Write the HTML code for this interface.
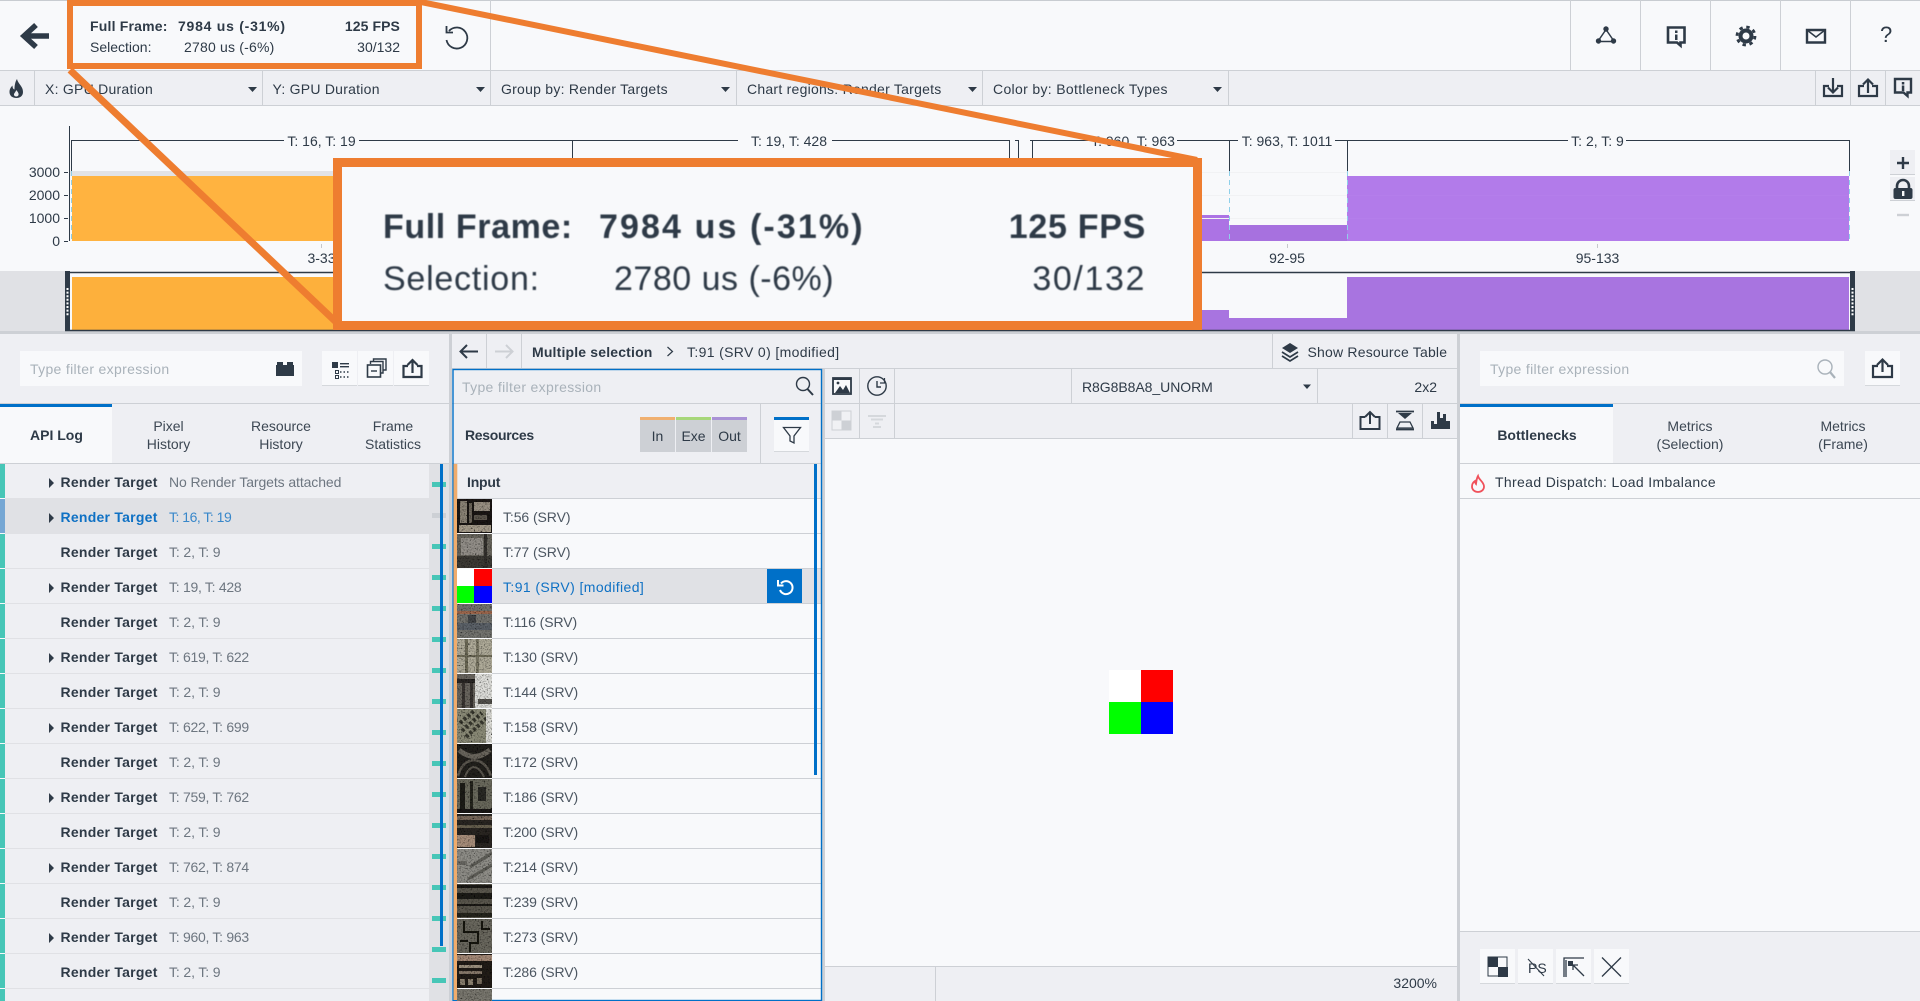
<!DOCTYPE html>
<html><head><meta charset="utf-8"><title>Frame Analyzer</title>
<style>
html,body{margin:0;padding:0;width:1920px;height:1001px;overflow:hidden;background:#f8f9fb}
body{position:relative;font-family:"Liberation Sans",sans-serif;font-size:14px;color:#2e3a47}
.b{position:absolute}
.t{position:absolute;white-space:nowrap;line-height:20px;height:20px}
.r{text-align:right}
.c{text-align:center;transform:translateX(-50%)}
.g{color:#6d7680}
.s{letter-spacing:-.12px}
.d{letter-spacing:-.28px}
.bo{font-weight:bold}
.rt{font-weight:bold;left:60.5px;letter-spacing:.25px}
.ph{color:#a9b2ba;letter-spacing:.33px}
.sel{color:#0f71c4}
.res{color:#4c5661;left:503px;letter-spacing:-.08px}
.tb{letter-spacing:.25px}
.big{font-size:34px;line-height:40px;height:40px}
svg{position:absolute;left:0;top:0}
.tab{position:absolute;white-space:nowrap;text-align:center;line-height:18px;transform:translateX(-50%);color:#3c4753}
</style></head><body>

<!-- backgrounds -->
<div class="b" style="left:0;top:0;width:1920px;height:1px;background:#c8ccd1"></div>
<div class="b" style="left:0;top:70px;width:1920px;height:1px;background:#cdd0d5"></div>
<div class="b" style="left:0;top:71px;width:1920px;height:34px;background:#eeeff3"></div>
<div class="b" style="left:0;top:105px;width:1920px;height:1px;background:#cdd0d5"></div>
<div class="b" style="left:0;top:271px;width:1920px;height:60px;background:#e0e1e5"></div>
<div class="b" style="left:65px;top:271px;width:1790px;height:60px;background:#f8f9fb"></div>
<div class="b" style="left:0;top:331px;width:1920px;height:3px;background:#cdd0d5"></div>
<div class="b" style="left:0;top:334px;width:449px;height:667px;background:#eeeff3"></div>
<div class="b" style="left:449px;top:334px;width:3px;height:667px;background:#cdd0d5"></div>
<div class="b" style="left:452px;top:334px;width:1005px;height:104px;background:#eeeff3"></div>
<div class="b" style="left:452px;top:438px;width:373px;height:60px;background:#eeeff3"></div>
<div class="b" style="left:822px;top:369px;width:3px;height:632px;background:#cdd0d5"></div>
<div class="b" style="left:1457px;top:334px;width:3px;height:667px;background:#cdd0d5"></div>
<div class="b" style="left:1460px;top:334px;width:460px;height:130px;background:#eeeff3"></div>
<div class="b" style="left:825px;top:966px;width:632px;height:35px;background:#eeeff3"></div>
<div class="b" style="left:825px;top:438px;width:632px;height:1px;background:#cdd0d5"></div>
<div class="b" style="left:825px;top:966px;width:632px;height:1px;background:#cdd0d5"></div>
<div class="b" style="left:1460px;top:931px;width:460px;height:70px;background:#eeeff3"></div>
<div class="b" style="left:1460px;top:931px;width:460px;height:1px;background:#cdd0d5"></div>
<div class="b" style="left:429px;top:464px;width:20px;height:537px;background:#e0e1e5"></div>

<!-- API log selected row -->
<div class="b" style="left:0;top:498px;width:429px;height:35px;background:#e0e1e5"></div>
<!-- active tabs -->
<div class="b" style="left:0;top:404px;width:112px;height:59px;background:#f8f9fb"></div>
<div class="b" style="left:1460px;top:404px;width:153px;height:59px;background:#f8f9fb"></div>
<div class="b" style="left:0;top:404px;width:112px;height:3px;background:#0070c8"></div>
<div class="b" style="left:1460px;top:404px;width:153px;height:3px;background:#0070c8"></div>
<!-- resource rows bg -->
<div class="b" style="left:457px;top:498px;width:365px;height:503px;background:#f8f9fb"></div>
<div class="b" style="left:492px;top:569px;width:330px;height:34px;background:#e0e1e5"></div>
<!-- inputs -->
<div class="b" style="left:20px;top:351px;width:282px;height:35px;background:#f8f9fb"></div>
<div class="b" style="left:1480px;top:351px;width:364px;height:35px;background:#f8f9fb"></div>
<div class="b" style="left:322px;top:351px;width:35px;height:34px;background:#f8f9fb;border-bottom:1px solid #d5d8dc"></div>
<div class="b" style="left:358px;top:351px;width:35px;height:34px;background:#f8f9fb;border-bottom:1px solid #d5d8dc"></div>
<div class="b" style="left:394px;top:351px;width:35px;height:34px;background:#f8f9fb;border-bottom:1px solid #d5d8dc"></div>
<div class="b" style="left:1865px;top:351px;width:35px;height:34px;background:#f8f9fb;border-bottom:1px solid #d5d8dc"></div>
<div class="b" style="left:1480px;top:949px;width:35px;height:34px;background:#f8f9fb;border-bottom:1px solid #d5d8dc"></div>
<div class="b" style="left:1518px;top:949px;width:35px;height:34px;background:#f8f9fb;border-bottom:1px solid #d5d8dc"></div>
<div class="b" style="left:1556px;top:949px;width:35px;height:34px;background:#f8f9fb;border-bottom:1px solid #d5d8dc"></div>
<div class="b" style="left:1594px;top:949px;width:35px;height:34px;background:#f8f9fb;border-bottom:1px solid #d5d8dc"></div>
<!-- In Exe Out -->
<div class="b" style="left:640px;top:417px;width:35px;height:32px;background:#cdd0d5;border-top:3px solid #f0b070"></div>
<div class="b" style="left:676px;top:417px;width:35px;height:32px;background:#cdd0d5;border-top:3px solid #a7d77a"></div>
<div class="b" style="left:712px;top:417px;width:35px;height:32px;background:#cdd0d5;border-top:3px solid #a992d6"></div>
<div class="b" style="left:774px;top:417px;width:35px;height:31px;background:#f8f9fb;border-top:3px solid #0070c8;border-bottom:1px solid #d5d8dc"></div>
<!-- test image -->
<div class="b" style="left:1109px;top:670px;width:32px;height:32px;background:#fff"></div>
<div class="b" style="left:1141px;top:670px;width:32px;height:32px;background:#f00"></div>
<div class="b" style="left:1109px;top:702px;width:32px;height:32px;background:#0f0"></div>
<div class="b" style="left:1141px;top:702px;width:32px;height:32px;background:#00f"></div>
<!-- undo btn -->
<div class="b" style="left:767px;top:569px;width:35px;height:34px;background:#0070c8"></div>

<svg width="1920" height="1001" viewBox="0 0 1920 1001">
<defs>
<filter id="n" x="0" y="0" width="100%" height="100%">
<feTurbulence type="fractalNoise" baseFrequency="0.7" numOctaves="2" seed="4" result="a"/>
<feColorMatrix in="a" type="matrix" values="1.2 1.2 1.2 0 -0.95 1.2 1.2 1.2 0 -0.95 1.2 1.2 1.2 0 -0.95 0 0 0 0 1" result="g"/>
<feBlend in="SourceGraphic" in2="g" mode="multiply" result="m"/>
<feComposite in="m" in2="SourceGraphic" operator="in"/>
</filter>
</defs>

<!-- separators -->
<g stroke="#cdd0d5" stroke-width="1">
<path d="M490.5 0V70M1570.5 0V70M1640.5 0V70M1710.5 0V70M1780.5 0V70M1850.5 0V70"/>
<path d="M34.5 71V105M262.5 71V105M490.5 71V105M736.5 71V105M982.5 71V105M1228.5 71V105M1815.5 71V105M1850.5 71V105M1885.5 71V105"/>
<path d="M0 403.5H449M0 463.5H449M452 368.5H1457M452 403.5H1457M452 463.5H822M1460 403.5H1920M1460 463.5H1920M1460 498.5H1920"/>
<path d="M486.5 334V368M521.5 334V368M1272.5 334V368M760.5 404V463M859.5 369V438M894.5 369V438M1071.5 369V403M1317.5 369V403M1352.5 404V438M1387.5 404V438M1422.5 404V438M935.5 966V1001"/>
</g>
<!-- API rows lines -->
<path d="M5 498.500H429M5 533.500H429M5 568.500H429M5 603.500H429M5 638.500H429M5 673.500H429M5 708.500H429M5 743.500H429M5 778.500H429M5 813.500H429M5 848.500H429M5 883.500H429M5 918.500H429M5 953.500H429M5 988.500H429" stroke="#e0e1e5"/>
<!-- resource row lines -->
<path d="M457 498.500H822M492 533.500H822M492 568.500H822M492 603.500H822M492 638.500H822M492 673.500H822M492 708.500H822M492 743.500H822M492 778.500H822M492 813.500H822M492 848.500H822M492 883.500H822M492 918.500H822M492 953.500H822M492 988.500H822" stroke="#cdd0d5"/>
<!-- left strip -->
<rect x="0" y="464" width="5" height="537" fill="#47c6b7"/>
<rect x="0" y="499" width="5" height="34" fill="#76a7d4"/>
<path d="M0 498.500H5M0 533.500H5M0 568.500H5M0 603.500H5M0 638.500H5M0 673.500H5M0 708.500H5M0 743.500H5M0 778.500H5M0 813.500H5M0 848.500H5M0 883.500H5M0 918.500H5M0 953.500H5M0 988.500H5" stroke="#f8f9fb"/>
<!-- teal marks -->
<g fill="#47c6b7">
<rect x="432" y="482" width="14" height="5"/>
<rect x="432" y="513" width="14" height="5" fill="#cdd0d5"/>
<rect x="432" y="544" width="14" height="5"/><rect x="432" y="575" width="14" height="5"/>
<rect x="432" y="606" width="14" height="5"/><rect x="432" y="637" width="14" height="5"/>
<rect x="432" y="668" width="14" height="5"/><rect x="432" y="699" width="14" height="5"/>
<rect x="432" y="730" width="14" height="5"/><rect x="432" y="761" width="14" height="5"/>
<rect x="432" y="792" width="14" height="5"/><rect x="432" y="823" width="14" height="5"/>
<rect x="432" y="854" width="14" height="5"/><rect x="432" y="885" width="14" height="5"/>
<rect x="432" y="916" width="14" height="5"/><rect x="432" y="947" width="14" height="5"/>
<rect x="432" y="978" width="14" height="5"/>
</g>
<rect x="440" y="464" width="3" height="482" fill="#0070c8"/>
<!-- expand arrows -->
<path d="M49 478L54 483L49 488ZM49 513L54 518L49 523ZM49 583L54 588L49 593ZM49 653L54 658L49 663ZM49 723L54 728L49 733ZM49 793L54 798L49 803ZM49 863L54 868L49 873ZM49 933L54 938L49 943Z" fill="#2e3a47"/>

<!-- resources border -->
<rect x="453" y="369.500" width="368.500" height="631" fill="none" stroke="#0070c8" stroke-width="1.400"/>
<rect x="453.500" y="464" width="3.800" height="536" fill="#f0ac6c"/>
<rect x="814" y="464" width="3" height="311" fill="#0070c8"/>

<!-- thumbs -->
<g filter="url(#n)" transform="translate(0,1)">
<rect x="457" y="498" width="35" height="34" fill="#1c1815"/><rect x="460" y="500" width="7" height="22" fill="#8b8376"/><rect x="469" y="502" width="3" height="20" fill="#6d665b"/><rect x="474" y="501" width="16" height="9" fill="#9a9184"/><rect x="474" y="514" width="13" height="5" fill="#5d574d"/><rect x="459" y="524" width="32" height="7" fill="#a89e8d"/>
<rect x="457" y="533" width="35" height="34" fill="#6a675f"/><rect x="461" y="537" width="22" height="17" fill="#94908a"/><rect x="457" y="555" width="35" height="12" fill="#3d3b36"/><rect x="484" y="533" width="3" height="34" fill="#34322e"/>
<rect x="457" y="603" width="35" height="34" fill="#747470"/><rect x="457" y="610" width="35" height="3" fill="#a06a50"/><rect x="457" y="622" width="35" height="7" fill="#5d636a"/><rect x="468" y="614" width="8" height="8" fill="#44474a"/>
<rect x="457" y="638" width="35" height="34" fill="#b0ac9a"/><rect x="465" y="638" width="3" height="34" fill="#6f6c59"/><rect x="476" y="638" width="3" height="34" fill="#7d7a67"/><rect x="457" y="654" width="35" height="2" fill="#6f6c59"/>
<rect x="457" y="673" width="35" height="34" fill="#e0e0dc"/><rect x="457" y="673" width="18" height="34" fill="#6a665f"/><rect x="457" y="678" width="18" height="4" fill="#2b2825"/><rect x="462" y="682" width="3" height="25" fill="#3a3633"/><rect x="470" y="682" width="3" height="25" fill="#3a3633"/><rect x="478" y="698" width="14" height="5" fill="#55534e"/>
<rect x="457" y="708" width="35" height="34" fill="#8c8c78"/><path d="M462 730L482 712M466 736L488 716M460 722L474 710" stroke="#3a3a30" stroke-width="4" stroke-dasharray="3 2"/><rect x="486" y="708" width="6" height="34" fill="#dcdcd6"/>
<rect x="457" y="743" width="35" height="34" fill="#23211e"/><path d="M459 749Q474 762 490 749" fill="none" stroke="#6a665d" stroke-width="5"/><path d="M458 775Q462 760 474 759Q486 760 491 775" fill="none" stroke="#5c5850" stroke-width="2.500"/><path d="M465 776Q468 767 474 766Q480 767 484 776" fill="none" stroke="#5c5850" stroke-width="2"/>
<rect x="457" y="778" width="35" height="34" fill="#6b6a5d"/><rect x="460" y="782" width="5" height="26" fill="#1f1e19"/><rect x="470" y="780" width="3" height="30" fill="#26251f"/><rect x="478" y="786" width="8" height="14" fill="#2b2a25"/><rect x="457" y="808" width="35" height="4" fill="#1a1915"/>
<rect x="457" y="813" width="35" height="34" fill="#2a2622"/><rect x="457" y="815" width="35" height="4" fill="#7a6a5c"/><rect x="457" y="824" width="35" height="3" fill="#67604f"/><rect x="457" y="834" width="18" height="12" fill="#a98f7b"/><rect x="476" y="834" width="13" height="8" fill="#1b1916"/>
<rect x="457" y="848" width="35" height="34" fill="#8f8e88"/><path d="M470 866L492 852M468 878L492 864" stroke="#5f5e58" stroke-width="3"/><rect x="457" y="860" width="10" height="4" fill="#6f6e68"/>
<rect x="457" y="883" width="35" height="34" fill="#5a574d"/><rect x="457" y="884" width="35" height="3" fill="#1c1a16"/><rect x="457" y="892" width="35" height="6" fill="#1f1d19"/><rect x="457" y="903" width="35" height="2" fill="#1c1a16"/><rect x="457" y="912" width="35" height="4" fill="#27251f"/>
<rect x="457" y="918" width="35" height="34" fill="#6a685e"/><path d="M464 920V931H478V942H470V951M482 920V928H490M460 940H468" fill="none" stroke="#171611" stroke-width="2"/>
<rect x="457" y="953" width="35" height="34" fill="#221d19"/><rect x="457" y="954" width="35" height="6" fill="#a58a78"/><rect x="459" y="964" width="23" height="3" fill="#9d917f"/><rect x="459" y="970" width="23" height="3" fill="#86786a"/><rect x="460" y="978" width="5" height="6" fill="#8d8271"/><rect x="468" y="978" width="5" height="6" fill="#8d8271"/><rect x="477" y="977" width="5" height="6" fill="#7a6f60"/>
<rect x="457" y="988" width="35" height="12" fill="#7a786f"/>
</g>
<g transform="translate(0,1)">
<rect x="457" y="568" width="17" height="17" fill="#fff"/><rect x="474" y="568" width="18" height="17" fill="#f00"/>
<rect x="457" y="585" width="17" height="17" fill="#0f0"/><rect x="474" y="585" width="18" height="17" fill="#00f"/>
</g>

<!-- chart -->
<rect x="70" y="171" width="300" height="5" fill="#e2e3e6"/>
<rect x="72" y="176" width="300" height="65" fill="#ffb340"/>
<rect x="1347" y="176" width="502" height="65" fill="#b27bea"/>
<rect x="1229" y="225" width="118" height="16" fill="#a771df"/>
<rect x="1190" y="215" width="39" height="26" fill="#ac73e4"/>
<path d="M1202 172.500H1347M1202 195.500H1347M1202 218.500H1347" stroke="#f1f2f4"/>
<path d="M1347 195.500H1849M1347 218.500H1849" stroke="#b47eeb"/>
<path d="M1229.500 171V241M1347.500 171V241M1849.500 171V241M71.500 171V241" stroke="#8fd0ea" stroke-dasharray="5 4"/>
<path d="M69.500 126V241M64 172.500H68M64 195.500H68M64 218.500H68M64 241.500H68" stroke="#2e3a47"/>
<path d="M71.500 171V140.500H284M359 140.500H572M572.500 171V140.500H738M832 140.500H1009.500V171M1015 140.500H1018.500V171M1030 140.500H1090M1177 140.500H1229.500V171M1229.500 140.500H1238M1335 140.500H1347.500V171M1347.500 140.500H1568M1626 140.500H1849.500V171M1032.500 140.500V171" stroke="#2e3a47" fill="none"/>
<path d="M321.500 244V248M1287.500 244V248M1597.500 244V248" stroke="#c5c8cc"/>

<!-- mini chart -->
<rect x="72" y="277" width="300" height="53" fill="#fdb03c"/>
<rect x="1347" y="277" width="502" height="53" fill="#a874e0"/>
<rect x="1229" y="318" width="118" height="12" fill="#a874e0"/>
<rect x="1190" y="310" width="39" height="20" fill="#a874e0"/>
<path d="M65 272.500H1855M65 330.500H1855" stroke="#2e3a47" stroke-width="1.400"/>
<rect x="65" y="271" width="5" height="60" fill="#2e3a47"/>
<rect x="1850" y="271" width="5" height="60" fill="#2e3a47"/>
<path d="M67.500 288V316M1852.500 288V316" stroke="#fff" stroke-width="2" stroke-dasharray="2 1.600"/>

<!-- chart controls -->
<rect x="1890" y="150" width="25" height="24" fill="#eeeff3"/><rect x="1890" y="177" width="25" height="23" fill="#eeeff3"/>
<path d="M1890 174.500H1915M1890 200.500H1915" stroke="#cdd0d5"/>
<path d="M1903 157V169M1897 163H1909" stroke="#2e3a47" stroke-width="2.400"/>
<path d="M1897 190V186a6 6 0 0 1 12 0V190" fill="none" stroke="#2e3a47" stroke-width="2.600"/>
<rect x="1893.500" y="188" width="19" height="11" rx="2" fill="#2e3a47"/><rect x="1902" y="191" width="2.400" height="5" fill="#f8f9fb"/>
<path d="M1897 215H1909" stroke="#cdd0d5" stroke-width="2.400"/>

<!-- top icons -->
<path d="M49 36H25" stroke="#2e3a47" stroke-width="5.500" fill="none"/>
<path d="M36 25L24 36L36 47" stroke="#2e3a47" stroke-width="5.500" fill="none"/>
<path d="M449 31A10.500 10.500 0 1 1 446.500 40" fill="none" stroke="#2e3a47" stroke-width="1.800"/>
<path d="M446.500 26V32.500H453" fill="none" stroke="#2e3a47" stroke-width="1.800"/>

<circle cx="1606" cy="29" r="2.700" fill="#2e3a47"/><circle cx="1598.500" cy="41" r="2.700" fill="#2e3a47"/><circle cx="1613.500" cy="41" r="2.700" fill="#2e3a47"/>
<path d="M1605 31L1599.500 39M1607 31L1612.500 39M1601 41.500H1611" stroke="#2e3a47" stroke-width="1.500" fill="none"/>
<path d="M1668 27.500H1684.500V42.500H1680.500V45.500L1677 42.500H1668Z" fill="none" stroke="#2e3a47" stroke-width="2.600"/>
<rect x="1675" y="30.500" width="2.500" height="2.500" fill="#2e3a47"/><rect x="1675" y="34.500" width="2.500" height="5.500" fill="#2e3a47"/>
<circle cx="1746" cy="36" r="5.500" fill="none" stroke="#2e3a47" stroke-width="4"/>
<circle cx="1746" cy="36" r="9" fill="none" stroke="#2e3a47" stroke-width="2.800" stroke-dasharray="3.400 3.670"/>
<path d="M1807 30H1825V42.500H1807Z" fill="none" stroke="#2e3a47" stroke-width="2.400"/>
<path d="M1807 30L1816 37L1825 30" fill="none" stroke="#2e3a47" stroke-width="1.500"/>

<!-- flame -->
<path d="M17 79C18 84 23 86 23 92C23 96 20 98 16.500 98C12 98 9.500 95.500 9.500 92C9.500 89 11 87 12.500 85.500C12.500 87.500 13 89 14.500 89.500C14.500 86 15 82 17 79Z" fill="#2e3a47"/>
<path d="M16.500 90C17.500 92 19 93 18.500 95C18 97 14.500 97 14 95C13.700 93.500 15.500 92 16.500 90Z" fill="#eeeff3"/>

<!-- dropdown triangles -->
<path d="M248 87H257L252.500 92ZM476 87H485L480.500 92ZM721 87H730L725.500 92ZM968 87H977L972.500 92ZM1213 87H1222L1217.500 92ZM1303 384.500H1311L1307 389Z" fill="#2e3a47"/>

<!-- toolbar right: download, upload, info -->
<path d="M1829 86H1824V96H1842V86H1837" fill="none" stroke="#2e3a47" stroke-width="2.200"/>
<path d="M1833 78V92M1828 87.500L1833 92.500L1838 87.500" fill="none" stroke="#2e3a47" stroke-width="2.200"/>
<path d="M1864 86H1859V96H1877V86H1872" fill="none" stroke="#2e3a47" stroke-width="2.200"/>
<path d="M1868 93V79.500M1863 84.500L1868 79.500L1873 84.500" fill="none" stroke="#2e3a47" stroke-width="2.200"/>
<path d="M1895 79H1911V92.500H1907.500V96L1903.500 92.500H1895Z" fill="none" stroke="#2e3a47" stroke-width="2.400"/>
<rect x="1901.800" y="82" width="2.500" height="2.500" fill="#2e3a47"/><rect x="1901.800" y="85.500" width="2.500" height="5.500" fill="#2e3a47"/>

<!-- left panel icons -->
<path d="M276 365H294V376H276ZM277 362H283V365H277ZM287 362H293V365H287Z" fill="#2e3a47"/>
<rect x="332" y="362" width="6" height="6" fill="#2e3a47"/><rect x="340" y="363" width="9" height="1.400" fill="#2e3a47"/><rect x="340" y="366" width="9" height="1.400" fill="#2e3a47"/>
<path d="M335.500 370.500h3v3h-3zM335.500 375.500h3v3h-3z" fill="none" stroke="#2e3a47" stroke-width="1"/>
<path d="M340 372h1.500M343.500 372h1.500M347 372h1.500M340 377h1.500M343.500 377h1.500M347 377h1.500" stroke="#2e3a47" stroke-width="1.400"/>
<rect x="367.500" y="365" width="13" height="12" fill="none" stroke="#2e3a47" stroke-width="1.600"/>
<path d="M370.500 364V361.500H383V373H381M373.500 361V359H386V370H383.500" fill="none" stroke="#2e3a47" stroke-width="1.400"/>
<path d="M371 371H377" stroke="#2e3a47" stroke-width="1.400"/>
<path d="M408 366H403.500V377H421.500V366H417" fill="none" stroke="#2e3a47" stroke-width="2.200"/>
<path d="M412.500 373V360M407.500 365L412.500 360L417.500 365" fill="none" stroke="#2e3a47" stroke-width="2.200"/>

<!-- middle header arrows -->
<path d="M478 351.500H461M467 345L460.500 351.500L467 358" fill="none" stroke="#2e3a47" stroke-width="2"/>
<path d="M495 351.500H512M506 345L512.500 351.500L506 358" fill="none" stroke="#cdd0d5" stroke-width="2"/>
<path d="M667.500 347L672.500 351.500L667.500 356" fill="none" stroke="#2e3a47" stroke-width="1.200"/>
<!-- stack icon -->
<path d="M1290 343L1298 348L1290 353L1282 348Z" fill="#2e3a47"/>
<path d="M1282 352L1290 357L1298 352M1282 356L1290 361L1298 356" fill="none" stroke="#2e3a47" stroke-width="1.700"/>
<!-- search -->
<circle cx="803" cy="384" r="6.500" fill="none" stroke="#2e3a47" stroke-width="1.400"/>
<path d="M807.500 389L813 395" stroke="#2e3a47" stroke-width="2"/>
<circle cx="1825" cy="367" r="7" fill="none" stroke="#a9b2ba" stroke-width="1.400"/>
<path d="M1830 372L1835 378" stroke="#a9b2ba" stroke-width="2.200"/>
<!-- funnel -->
<path d="M783.500 427.500H800.500L794 436V443L790 441V436Z" fill="none" stroke="#2e3a47" stroke-width="1.300"/>
<!-- undo small white -->
<path d="M781 583.500A6.500 6.500 0 1 1 780 590" fill="none" stroke="#fff" stroke-width="2"/>
<path d="M778 580V585.500H783.500" fill="none" stroke="#fff" stroke-width="2"/>
<!-- viewer icons -->
<rect x="833" y="378" width="18" height="16" fill="#f8f9fb" stroke="#2e3a47" stroke-width="1.800"/>
<rect x="833" y="378" width="18" height="2" fill="#2e3a47"/>
<path d="M835 393L840 386L843 390L846 385L850 393Z" fill="#2e3a47"/><circle cx="838" cy="383" r="1.400" fill="#2e3a47"/>
<circle cx="877" cy="386" r="9.200" fill="none" stroke="#2e3a47" stroke-width="1.400"/>
<path d="M877 381V387H881" fill="none" stroke="#2e3a47" stroke-width="1.400"/>
<path d="M884.500 378V383H880" fill="none" stroke="#2e3a47" stroke-width="1.200"/>
<rect x="832" y="411" width="19" height="19" fill="#f0f1f4" stroke="#cdd0d5"/>
<rect x="832.500" y="411.500" width="9" height="9" fill="#cdd0d5"/><rect x="841.500" y="420.500" width="9" height="9" fill="#cdd0d5"/>
<path d="M868 416H886M871 419.500H883" stroke="#d5d8dc" stroke-width="2"/><path d="M873 427H881M875 423.500H879" stroke="#d5d8dc" stroke-width="2"/>
<!-- viewer right icons -->
<g transform="translate(0,7)">
<path d="M1365 410H1360.500V422H1379.500V410H1375" fill="none" stroke="#2e3a47" stroke-width="2"/>
<path d="M1370 417V405M1365 410L1370 405L1375 410" fill="none" stroke="#2e3a47" stroke-width="2"/>
<path d="M1396 404.500H1414" stroke="#2e3a47" stroke-width="1.800"/>
<path d="M1398 406H1412L1405 412Z" fill="#2e3a47"/>
<path d="M1400 415H1410L1413 421H1397Z" fill="none" stroke="#2e3a47" stroke-width="1.300"/>
<path d="M1396 422.500H1414" stroke="#2e3a47" stroke-width="1.800"/>
<path d="M1431 422V414H1434V417H1437V405H1440V411H1443V407H1446V414H1450V422Z" fill="#2e3a47"/>
</g>
<!-- right panel icons -->
<path d="M1878 366H1873V377H1892V366H1887" fill="none" stroke="#2e3a47" stroke-width="2.200"/>
<path d="M1882.500 372V359.500M1877 365L1882.500 359.500L1888 365" fill="none" stroke="#2e3a47" stroke-width="2.200"/>
<path d="M1478 476C1479 480 1484 482 1484 486.500C1484 490 1481 492 1478 492C1475 492 1472 490 1472 486.500C1472 484 1473.500 482 1475 481C1475 482.500 1475.500 483.500 1476 484C1476.500 481 1476.500 478.500 1478 476Z" fill="none" stroke="#f0505a" stroke-width="1.800"/>
<rect x="1488" y="957" width="19" height="19" fill="#f8f9fb" stroke="#2e3a47"/>
<rect x="1488" y="957" width="10" height="10" fill="#2e3a47"/><rect x="1498" y="967" width="10" height="10" fill="#2e3a47"/>
<path d="M1528 959L1544 976" stroke="#2e3a47" stroke-width="1.100"/>
<text x="1528" y="973" font-size="14" fill="#2e3a47" font-family="Liberation Sans">PS</text>
<path d="M1564 977V958H1584M1566 960V977" stroke="#2e3a47" fill="none" stroke-width="1.300"/>
<rect x="1568" y="961" width="5" height="5" fill="#2e3a47"/>
<path d="M1584 976L1573 965M1573 970V965H1578" stroke="#2e3a47" fill="none" stroke-width="1.300"/>
<path d="M1602 957.500L1621 976.500M1621 957.500L1602 976.500" stroke="#2e3a47" fill="none" stroke-width="1.300"/>
</svg>

<!-- toolbar text -->
<div class="t tb" style="left:45px;top:79px">X: GPU Duration</div>
<div class="t tb" style="left:272.500px;top:79px">Y: GPU Duration</div>
<div class="t tb" style="left:501px;top:79px">Group by: Render Targets</div>
<div class="t tb" style="left:747px;top:79px">Chart regions: Render Targets</div>
<div class="t" style="left:993px;top:79px;letter-spacing:.33px">Color by: Bottleneck Types</div>

<!-- small stats -->
<div class="t bo" style="left:90px;top:16px;letter-spacing:.2px">Full Frame:</div>
<div class="t bo" style="left:178px;top:16px;letter-spacing:.75px">7984 us (-31%)</div>
<div class="t bo r" style="right:1520px;top:16px;letter-spacing:.1px">125 FPS</div>
<div class="t" style="left:90px;top:37px">Selection:</div>
<div class="t" style="left:184px;top:37px;letter-spacing:.2px">2780 us (-6%)</div>
<div class="t r" style="right:1520px;top:37px">30/132</div>
<div class="t" style="left:1880px;top:25px;font-size:22px">?</div>

<!-- chart labels -->
<div class="t r" style="right:1860px;top:162px">3000</div>
<div class="t r" style="right:1860px;top:185px">2000</div>
<div class="t r" style="right:1860px;top:208px">1000</div>
<div class="t r" style="right:1860px;top:231px">0</div>
<div class="t c" style="left:321.500px;top:131px">T: 16, T: 19</div>
<div class="t c" style="left:789px;top:131px">T: 19, T: 428</div>
<div class="t c" style="left:1133px;top:131px">T: 960, T: 963</div>
<div class="t c" style="left:1287px;top:131px">T: 963, T: 1011</div>
<div class="t c" style="left:1597.500px;top:131px">T: 2, T: 9</div>
<div class="t c" style="left:321.500px;top:248px">3-33</div>
<div class="t c" style="left:1287px;top:248px">92-95</div>
<div class="t c" style="left:1597.500px;top:248px">95-133</div>

<!-- left panel -->
<div class="t ph" style="left:30px;top:359px">Type filter expression</div>
<div class="t bo" style="left:30px;top:425px;color:#2e3a47">API Log</div>
<div class="tab" style="left:168.500px;top:417px">Pixel<br>History</div>
<div class="tab" style="left:281px;top:417px">Resource<br>History</div>
<div class="tab" style="left:393px;top:417px">Frame<br>Statistics</div>

<div class="t rt" style="top:472px">Render Target</div><div class="t g" style="left:169px;top:472px;letter-spacing:-.1px">No Render Targets attached</div>
<div class="t rt sel" style="top:507px">Render Target</div><div class="t sel" style="left:169px;top:507px;opacity:.8;letter-spacing:-.5px">T: 16, T: 19</div>
<div class="t rt" style="top:542px">Render Target</div><div class="t g s" style="left:169px;top:542px">T: 2, T: 9</div>
<div class="t rt" style="top:577px">Render Target</div><div class="t g d" style="left:169px;top:577px">T: 19, T: 428</div>
<div class="t rt" style="top:612px">Render Target</div><div class="t g s" style="left:169px;top:612px">T: 2, T: 9</div>
<div class="t rt" style="top:647px">Render Target</div><div class="t g d" style="left:169px;top:647px">T: 619, T: 622</div>
<div class="t rt" style="top:682px">Render Target</div><div class="t g s" style="left:169px;top:682px">T: 2, T: 9</div>
<div class="t rt" style="top:717px">Render Target</div><div class="t g d" style="left:169px;top:717px">T: 622, T: 699</div>
<div class="t rt" style="top:752px">Render Target</div><div class="t g s" style="left:169px;top:752px">T: 2, T: 9</div>
<div class="t rt" style="top:787px">Render Target</div><div class="t g d" style="left:169px;top:787px">T: 759, T: 762</div>
<div class="t rt" style="top:822px">Render Target</div><div class="t g s" style="left:169px;top:822px">T: 2, T: 9</div>
<div class="t rt" style="top:857px">Render Target</div><div class="t g d" style="left:169px;top:857px">T: 762, T: 874</div>
<div class="t rt" style="top:892px">Render Target</div><div class="t g s" style="left:169px;top:892px">T: 2, T: 9</div>
<div class="t rt" style="top:927px">Render Target</div><div class="t g d" style="left:169px;top:927px">T: 960, T: 963</div>
<div class="t rt" style="top:962px">Render Target</div><div class="t g s" style="left:169px;top:962px">T: 2, T: 9</div>

<!-- middle -->
<div class="t" style="left:532px;top:341.500px;font-weight:bold;letter-spacing:.17px">Multiple selection</div>
<div class="t" style="left:687px;top:341.500px;letter-spacing:.35px">T:91 (SRV 0) [modified]</div>
<div class="t" style="left:1307.500px;top:342px;letter-spacing:.2px">Show Resource Table</div>
<div class="t ph" style="left:462px;top:377px">Type filter expression</div>
<div class="t" style="left:465px;top:425px;font-weight:bold;letter-spacing:-.3px">Resources</div>
<div class="t c" style="left:657.500px;top:426px">In</div>
<div class="t c" style="left:693.500px;top:426px">Exe</div>
<div class="t c" style="left:729.500px;top:426px">Out</div>
<div class="t" style="left:467px;top:472px;font-weight:bold;letter-spacing:-.2px">Input</div>
<div class="t res" style="top:507px">T:56 (SRV)</div>
<div class="t res" style="top:542px">T:77 (SRV)</div>
<div class="t sel" style="left:503px;top:577px;letter-spacing:.4px">T:91 (SRV) [modified]</div>
<div class="t res" style="top:612px">T:116 (SRV)</div>
<div class="t res" style="top:647px">T:130 (SRV)</div>
<div class="t res" style="top:682px">T:144 (SRV)</div>
<div class="t res" style="top:717px">T:158 (SRV)</div>
<div class="t res" style="top:752px">T:172 (SRV)</div>
<div class="t res" style="top:787px">T:186 (SRV)</div>
<div class="t res" style="top:822px">T:200 (SRV)</div>
<div class="t res" style="top:857px">T:214 (SRV)</div>
<div class="t res" style="top:892px">T:239 (SRV)</div>
<div class="t res" style="top:927px">T:273 (SRV)</div>
<div class="t res" style="top:962px">T:286 (SRV)</div>
<div class="t" style="left:1082px;top:377px;letter-spacing:-.05px">R8G8B8A8_UNORM</div>
<div class="t r" style="right:483px;top:377px">2x2</div>
<div class="t r" style="right:483px;top:973px">3200%</div>

<!-- right panel -->
<div class="t ph" style="left:1490px;top:359px">Type filter expression</div>
<div class="t c bo" style="left:1537px;top:425px">Bottlenecks</div>
<div class="tab" style="left:1690px;top:417px">Metrics<br>(Selection)</div>
<div class="tab" style="left:1843px;top:417px">Metrics<br>(Frame)</div>
<div class="t" style="left:1495px;top:472px;letter-spacing:.35px">Thread Dispatch: Load Imbalance</div>

<!-- callout overlay -->
<svg width="1920" height="1001" viewBox="0 0 1920 1001">
<path d="M70 70L336 322" stroke="#ee7d30" stroke-width="7" fill="none"/>
<path d="M421 2L1197 160" stroke="#ee7d30" stroke-width="6" fill="none"/>
<rect x="70" y="3" width="349" height="63" fill="none" stroke="#ee7d30" stroke-width="6"/>
<rect x="337.500" y="162.500" width="860" height="163" fill="#f8f9fb" stroke="#ee7d30" stroke-width="9"/>
</svg>
<div class="b" style="left:342px;top:167px;width:851px;height:154px;filter:blur(.5px)">
<div class="t bo big" style="left:41px;top:40px;letter-spacing:.6px">Full Frame:</div>
<div class="t bo big" style="left:257px;top:40px;letter-spacing:2.1px">7984 us (-31%)</div>
<div class="t bo r big" style="right:47px;top:40px;letter-spacing:.7px">125 FPS</div>
<div class="t big" style="left:41px;top:92px;letter-spacing:.75px">Selection:</div>
<div class="t big" style="left:272px;top:92px;letter-spacing:.5px">2780 us (-6%)</div>
<div class="t r big" style="right:47px;top:92px;letter-spacing:1.6px">30/132</div>
</div>
</body></html>
